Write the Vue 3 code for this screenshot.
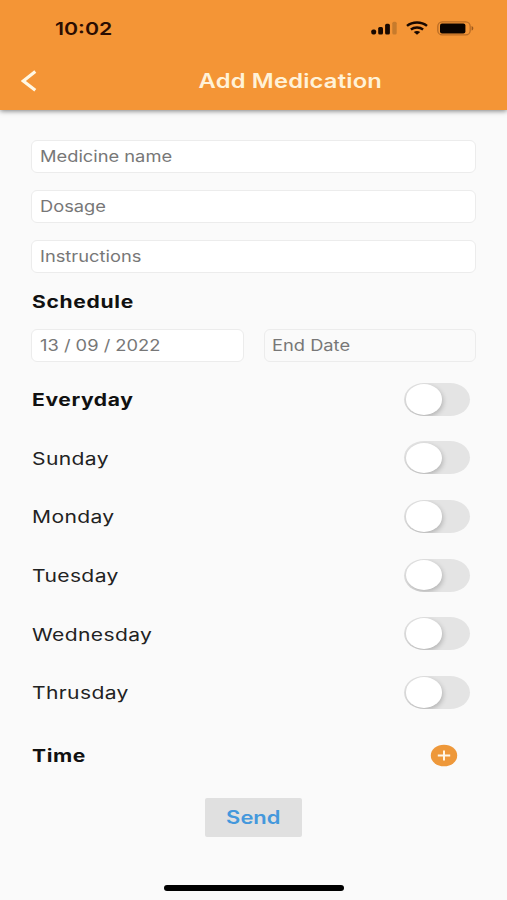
<script setup>
import { reactive } from 'vue'

const fields = ['Medicine name', 'Dosage', 'Instructions']
const days = reactive([
  { name: 'Everyday', on: false, strong: true },
  { name: 'Sunday', on: false },
  { name: 'Monday', on: false },
  { name: 'Tuesday', on: false },
  { name: 'Wednesday', on: false },
  { name: 'Thrusday', on: false },
])
</script>

<template>
  <div class="screen">
    <header class="header">
      <div class="status">
        <span class="clock wide">10:02</span>
        <div class="indicators">
          <svg class="signal" width="27" height="14" viewBox="0 0 27 14">
            <rect x="0.3" y="8.5" width="4.8" height="5" rx="1.8" />
            <rect x="7.2" y="6" width="4.8" height="7.5" rx="1.5" />
            <rect x="14.1" y="2.8" width="4.8" height="10.7" rx="1.5" />
            <rect class="dim" x="21.3" y="0.7" width="4.4" height="12.8" rx="1.5" />
          </svg>
          <svg class="wifi" width="22" height="14" viewBox="0 0 22 14">
            <path d="M1 4.9C6.6.3 15.4.3 21 4.9M4.9 8.4c3.5-2.7 8.7-2.7 12.2 0" />
            <path class="solid" d="M7.8 11c1.8-1.4 4.6-1.4 6.4 0L11 13.7z" />
          </svg>
          <svg class="battery" width="37" height="15" viewBox="0 0 37 15">
            <rect class="case" x="0.8" y="0.9" width="32.4" height="13" rx="4.5" />
            <rect x="3" y="2.4" width="25.4" height="10" rx="2" />
            <path class="tip" d="M34.6 5v4.6c2.3-.8 2.3-3.8 0-4.6z" />
          </svg>
        </div>
      </div>
      <div class="bar">
        <svg class="back" width="16" height="22" viewBox="0 0 16 22">
          <path d="M14.3 1.6 2.3 11l12 9.2" />
        </svg>
        <h1 class="title"><span class="wide center">Add Medication</span></h1>
      </div>
    </header>

    <main class="form">
      <div v-for="f in fields" :key="f" class="field"><span class="wide">{{ f }}</span></div>
      <h2 class="heading"><span class="wide">Schedule</span></h2>
      <div class="dates">
        <div class="field"><span class="wide">13 / 09 / 2022</span></div>
        <div class="field empty"><span class="wide">End Date</span></div>
      </div>
      <div class="days">
        <div v-for="d in days" :key="d.name" class="day" :class="{ strong: d.strong }">
          <span class="wide">{{ d.name }}</span>
          <button class="switch" :class="{ on: d.on }" role="switch" :aria-checked="d.on" @click="d.on = !d.on">
            <span class="knob"></span>
          </button>
        </div>
      </div>
      <div class="time">
        <span class="wide">Time</span>
        <svg class="add" width="28" height="23" viewBox="0 0 28 23">
          <ellipse cx="14" cy="11.5" rx="13.2" ry="10.8" />
          <path d="M7.8 11.5h12.4M14 6.4v10.2" />
        </svg>
      </div>
      <button class="send"><span class="wide center">Send</span></button>
    </main>
    <div class="home"></div>
  </div>
</template>

<style>
body { background: #fafafa; }
</style>

<style scoped>
.screen {
  box-sizing: border-box;
  display: flex;
  flex-direction: column;
  width: 507px;
  height: 900px;
  overflow: hidden;
  background: #fafafa;
  font-family: Inter, "Liberation Sans", sans-serif;
  color: #222;
}
.wide {
  display: inline-block;
  transform: scaleX(1.219);
  transform-origin: left center;
  white-space: nowrap;
}
.center { transform-origin: center; }
.header {
  flex: none;
  height: 110px;
  background: #f49536;
  box-shadow: 0 1px 5px rgba(0, 0, 0, 0.5);
}
.status {
  display: flex;
  justify-content: space-between;
  align-items: center;
  height: 56px;
  padding: 0 33px 0 55px;
}
.clock { font-size: 17.5px; font-weight: 600; color: #2b0d02; }
.indicators { display: flex; align-items: center; }
.signal { fill: #180800; margin-right: 8px; }
.signal .dim { fill: #c77b2c; }
.wifi { fill: none; stroke: #180800; stroke-width: 2.5; margin-right: 9px; }
.wifi .solid { fill: #180800; stroke: none; }
.battery { fill: #0a0300; }
.battery .case { fill: none; stroke: #b96c25; stroke-width: 1.3; }
.battery .tip { fill: #9c5a1d; }
.bar { display: flex; align-items: center; height: 50px; padding-left: 21px; }
.back { fill: none; stroke: #fff8e4; stroke-width: 3.2; }
.title {
  flex: 1;
  margin: 0;
  padding-left: 36px;
  text-align: center;
  font-size: 19.5px;
  font-weight: 600;
  letter-spacing: 0.15px;
  color: #fff2d8;
}
.form {
  display: flex;
  flex-direction: column;
  flex: 1;
  padding: 30px 31px 0;
}
.field {
  box-sizing: border-box;
  display: flex;
  align-items: center;
  height: 33px;
  margin-bottom: 17px;
  padding: 0 8px 0 7.5px;
  border: 1px solid #ececec;
  border-radius: 6px;
  background: #fff;
  font-size: 15.5px;
  color: #777;
}
.field .wide { transform: scaleX(1.18); }
.heading {
  margin: 0;
  padding-left: 1px;
  height: 39px;
  line-height: 24px;
  font-size: 17.3px;
  font-weight: 700;
  letter-spacing: 0.55px;
  color: #111;
}
.dates { display: grid; grid-template-columns: 1fr 1fr; gap: 20px; }
.dates .field { margin: 0; }
.dates .empty { background: #fafafa; padding-left: 7px; }
.days { padding-top: 8px; }
.day {
  display: flex;
  align-items: center;
  justify-content: space-between;
  height: 58.6px;
  padding: 0 6px 0 1px;
  font-size: 17.3px;
  letter-spacing: 0.3px;
}
.day .wide, .time .wide { padding-top: 1px; }
.strong, .time { font-weight: 700; color: #111; letter-spacing: 0.5px; }
.switch {
  box-sizing: border-box;
  width: 66px;
  height: 33px;
  padding: 1.2px 1.5px;
  border: 0;
  border-radius: 20px / 16.5px;
  background: #e4e4e4;
  overflow: hidden;
}
.knob {
  display: block;
  width: 36.5px;
  height: 30.5px;
  border-radius: 50%;
  background: #fff;
  box-shadow: 1px 2px 5px rgba(0, 0, 0, 0.22);
}
.switch.on { background: #34c759; }
.on .knob { margin-left: auto; }
.time {
  display: flex;
  align-items: center;
  justify-content: space-between;
  height: 67px;
  padding: 0 18px 0 1px;
  font-size: 17.3px;
}
.add { fill: #ee983a; stroke: #fff6e6; stroke-width: 2; }
.add ellipse { stroke: none; }
.send {
  align-self: center;
  width: 97px;
  height: 39px;
  margin: 9px 0 0;
  padding: 1px 0 0;
  border: 0;
  border-radius: 2px;
  background: #e0e0e0;
  font: 600 18px Inter, "Liberation Sans", sans-serif;
  color: #4498dc;
}
.home {
  align-self: center;
  flex: none;
  width: 180px;
  height: 6px;
  margin-bottom: 9px;
  border-radius: 3px;
  background: #000;
}
</style>
